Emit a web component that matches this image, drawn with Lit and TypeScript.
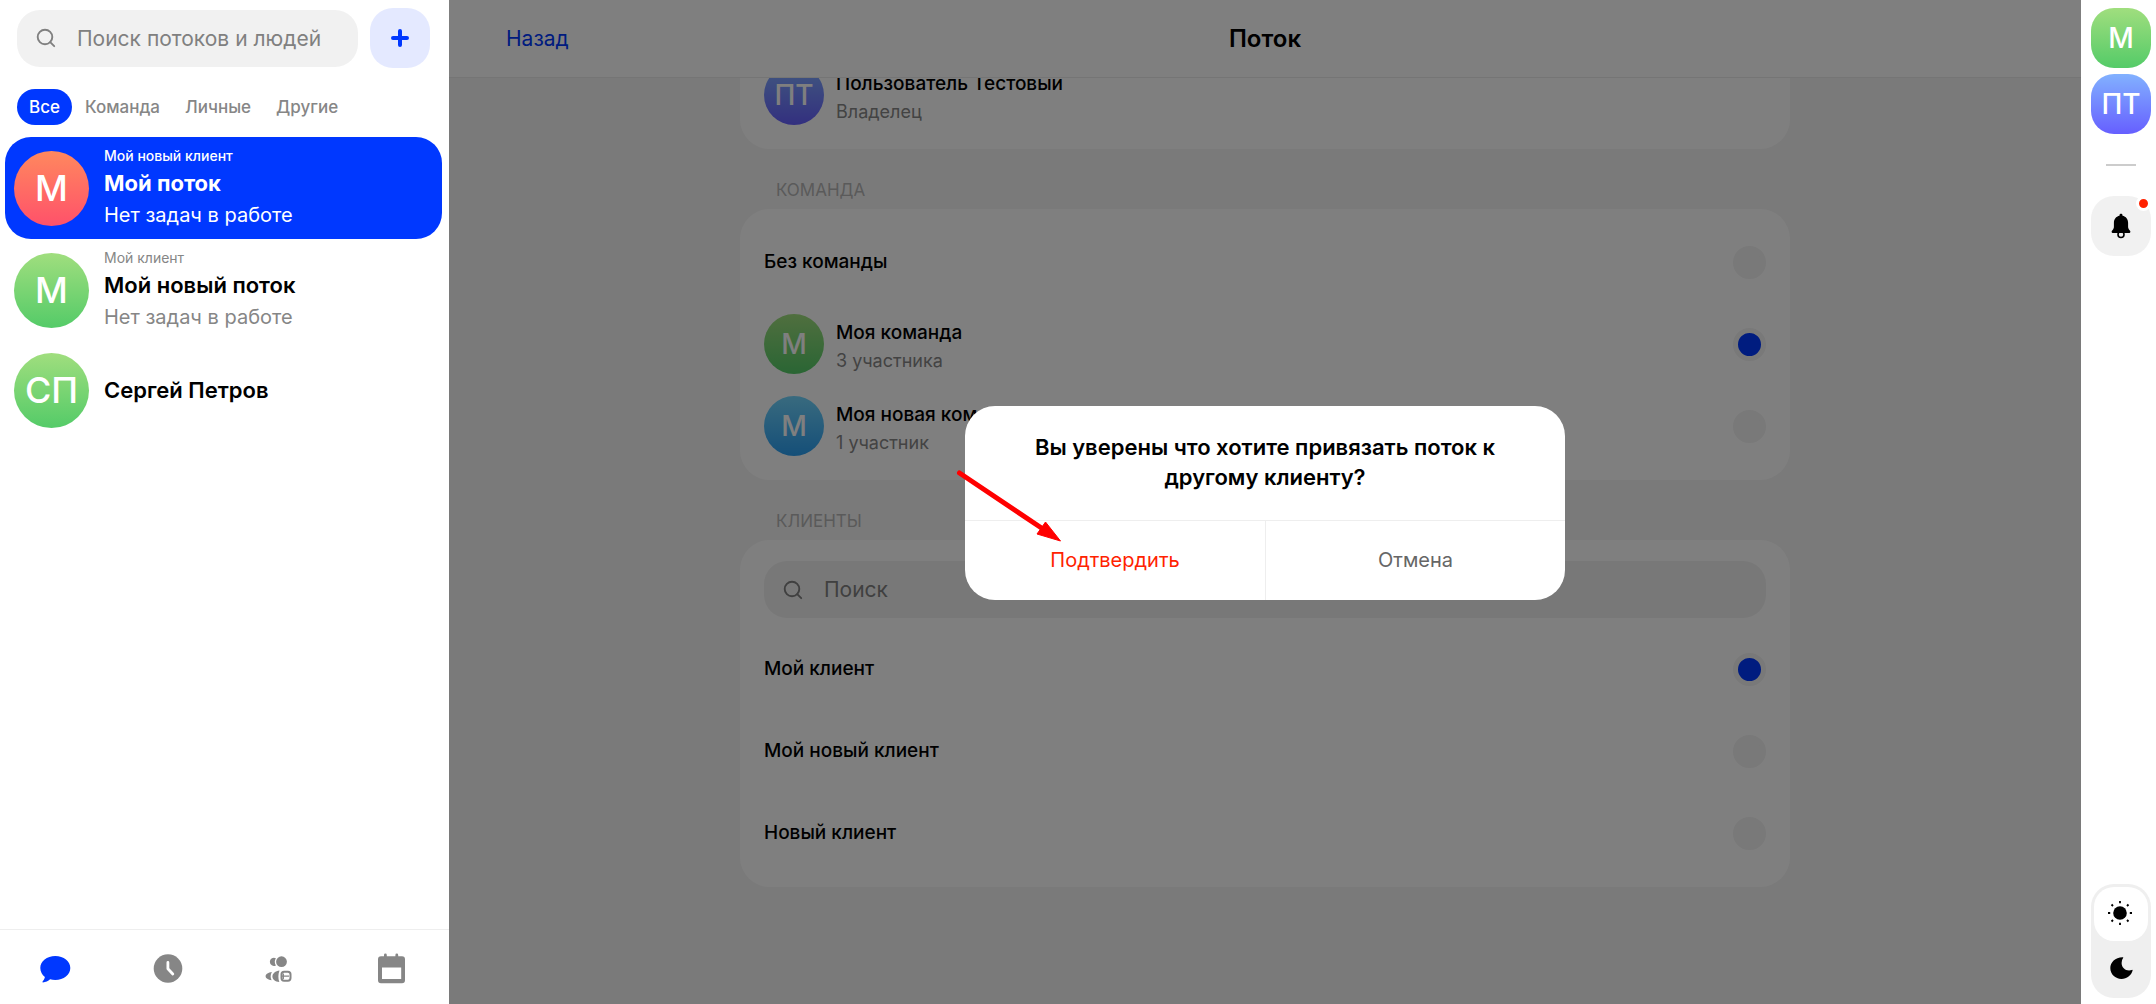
import { LitElement, html, css, svg, nothing } from "lit";
import { customElement, property, state } from "lit/decorators.js";
import { classMap } from "lit/directives/class-map.js";

type Tone = "green" | "coral" | "violet" | "azure";

interface Flow {
  initials: string;
  tone: Tone;
  client?: string;
  title: string;
  note?: string;
}

interface Choice {
  title: string;
  initials?: string;
  tone?: Tone;
  note?: string;
}

const FLOWS: Flow[] = [
  { initials: "М", tone: "coral", client: "Мой новый клиент", title: "Мой поток", note: "Нет задач в работе" },
  { initials: "М", tone: "green", client: "Мой клиент", title: "Мой новый поток", note: "Нет задач в работе" },
  { initials: "СП", tone: "green", title: "Сергей Петров" },
];

const TEAMS: Choice[] = [
  { title: "Без команды" },
  { title: "Моя команда", initials: "М", tone: "green", note: "3 участника" },
  { title: "Моя новая команда", initials: "М", tone: "azure", note: "1 участник" },
];

const CLIENTS: Choice[] = [
  { title: "Мой клиент" },
  { title: "Мой новый клиент" },
  { title: "Новый клиент" },
];

const FILTERS = ["Все", "Команда", "Личные", "Другие"];

const searchIcon = html`<svg class="glass" viewBox="0 0 20 20" width="20" height="20" aria-hidden="true">
  <circle cx="9" cy="9" r="7.300" fill="none" stroke="currentColor" stroke-width="1.900" />
  <path d="M14.200 14.200l4 4" fill="none" stroke="currentColor" stroke-width="1.900" stroke-linecap="round" />
</svg>`;

const navIcons = [
  {
    name: "chats",
    icon: svg`<path transform="translate(-.7 0)" d="M16 4c8.400 0 15 5.200 15 12s-6.600 12-15 12c-1.900 0-3.600-.3-5.200-.7C8.900 29 6.300 30.300 3.600 30.400c-.5 0-.6-.5-.3-.9 1-1.200 2-2.600 2.300-4.500C2.800 22.800 1 19.600 1 16 1 9.200 7.600 4 16 4z" fill="currentColor"/>`,
  },
  {
    name: "time",
    icon: svg`<circle cx="16" cy="16.500" r="14.300" fill="currentColor"/><path d="M15.900 10.500v6.300l4.900 5.200" fill="none" stroke="#fff" stroke-width="2.800" stroke-linecap="round" stroke-linejoin="round"/>`,
  },
  {
    name: "people",
    icon: svg`<g fill="currentColor"><circle cx="18.500" cy="9.700" r="5.400"/><path d="M12.900 6.200a4.100 4.100 0 1 0 0 7.200 6.800 6.800 0 0 1 0-7.200z"/><path d="M8.900 20c-3.500.5-6.300 2.100-6.300 4.200 0 2 2.600 3.600 6 4.100-1.300-2.500-1.300-5.500.3-8.300z"/><path d="M16.500 18.500c-4 .5-7.100 3-7.100 6 0 3 2.900 5.200 6.900 5.600-1.300-3.400-1.200-8.200.2-11.600z"/></g><rect x="18.500" y="19.700" width="9" height="9" rx="2.600" fill="none" stroke="currentColor" stroke-width="2"/><path d="M18.500 24.100h7.500M20.300 21.500v5.500" stroke="currentColor" stroke-width="1.300"/>`,
  },
  {
    name: "calendar",
    icon: svg`<path transform="translate(1 0)" d="M5 4.200h3V2.900a1.400 1.400 0 0 1 2.800 0v1.300h8.600V2.900a1.400 1.400 0 0 1 2.800 0v1.300H26A3 3 0 0 1 29 7.200v21A3 3 0 0 1 26 31.200H5a3 3 0 0 1-3-3v-21a3 3 0 0 1 3-3zM6 15.500v11.600h19.200V15.500z" fill="currentColor" fill-rule="evenodd"/>`,
  },
];

@customElement("user-avatar")
export class UserAvatar extends LitElement {
  @property() tone: Tone = "green";
  @property() size: "m" | "l" = "m";
  @property() shape: "round" | "tile" = "round";

  static styles = css`
    :host { display: block; flex: none; }
    .face {
      display: flex; align-items: center; justify-content: center;
      width: 60px; height: 60px; border-radius: 50%;
      color: #fff; font-size: 28px; line-height: 1; font-weight: 500;
    }
    .l { width: 75px; height: 75px; font-size: 36px; }
    .tile { border-radius: 23px; }
    .green { background: linear-gradient(#a0de7e, #54cb68); }
    .coral { background: linear-gradient(#ff885e, #ff516a); }
    .violet { background: linear-gradient(#82b1ff, #665fff); }
    .azure { background: linear-gradient(#72d5fd, #2a9ef1); }
  `;

  render() {
    return html`<div class="face ${this.tone} ${this.size} ${this.shape}"><slot></slot></div>`;
  }
}

@customElement("flow-sidebar")
export class FlowSidebar extends LitElement {
  @state() private filter = 0;
  @state() private current = 0;

  static styles = css`
    :host { display: flex; flex-direction: column; background: #fff; }
    button, input { font: inherit; border: 0; margin: 0; }
    button { cursor: pointer; }
    .top { display: flex; align-items: center; gap: 12px; padding: 8px 19px 0 17px; }
    .search {
      flex: 1; min-width: 0; height: 57px; box-sizing: border-box;
      display: flex; align-items: center; gap: 21px; padding: 0 19px;
      background: #f1f1f1; border-radius: 23px; color: #808080;
    }
    .glass { flex: none; }
    .field { flex: 1; min-width: 0; padding: 0; background: none; outline: 0; font-size: 21px; color: #000; }
    .field::placeholder { color: #808080; opacity: 1; }
    .add {
      width: 60px; height: 60px; border-radius: 23px; padding: 0;
      display: grid; place-items: center; background: #e4e9ff; color: #0038ff;
    }
    .filters { display: flex; gap: 1px; padding: 21px 17px 12px; }
    .filter {
      height: 36px; padding: 0 12px; border-radius: 18px; background: none;
      color: #868686; font-size: 17px; font-weight: 500;
    }
    .filter.on { background: #0038ff; color: #fff; }
    .list { flex: 1; min-height: 0; display: flex; flex-direction: column; padding: 0 7px 0 5px; overflow: hidden; }
    .flow {
      display: flex; align-items: center; gap: 15px; min-height: 98px; padding: 0 9px;
      border-radius: 26px; background: none; text-align: left; color: #868686;
    }
    .lines { display: flex; flex-direction: column; }
    .client { font-size: 14px; line-height: 24px; padding-top: 7px; }
    .title { font-size: 22px; line-height: 31px; font-weight: 600; color: #000; }
    .note { font-size: 20px; line-height: 33px; padding-bottom: 7px; }
    .flow.on { background: #0038ff; color: #fff; }
    .flow.on .client { font-weight: 500; }
    .flow.on .title { color: #fff; font-weight: 700; }
    .tabs {
      display: grid; grid-template-columns: repeat(4, 1fr); flex: none; height: 75px; box-sizing: border-box;
      padding: 2px 2px 0 0; border-top: 1px solid #eee;
    }
    .tab { display: grid; place-items: center; padding: 0; background: none; color: #868686; }
    .tab.on { color: #0038ff; }
  `;

  render() {
    return html`
      <div class="top">
        <label class="search">
          ${searchIcon}
          <input class="field" type="text" placeholder="Поиск потоков и людей" />
        </label>
        <button class="add">
          <svg viewBox="0 0 18 18" width="18" height="18" aria-hidden="true">
            <path d="M9 2v14M2 9h14" stroke="currentColor" stroke-width="4" stroke-linecap="round" />
          </svg>
        </button>
      </div>
      <div class="filters">
        ${FILTERS.map(
          (name, i) => html`<button class=${classMap({ filter: true, on: i === this.filter })}
            @click=${() => (this.filter = i)}>${name}</button>`,
        )}
      </div>
      <div class="list">
        ${FLOWS.map(
          (flow, i) => html`<button class=${classMap({ flow: true, on: i === this.current })}
            @click=${() => (this.current = i)}>
            <user-avatar tone=${flow.tone} size="l">${flow.initials}</user-avatar>
            <span class="lines">
              ${flow.client ? html`<span class="client">${flow.client}</span>` : nothing}
              <span class="title">${flow.title}</span>
              ${flow.note ? html`<span class="note">${flow.note}</span>` : nothing}
            </span>
          </button>`,
        )}
      </div>
      <nav class="tabs">
        ${navIcons.map(
          (item, i) => html`<button class=${classMap({ tab: true, on: i === 0 })}>
            <svg viewBox="0 0 32 32" width="32" height="32" aria-hidden="true">${item.icon}</svg>
          </button>`,
        )}
      </nav>
    `;
  }
}

@customElement("flow-settings")
export class FlowSettings extends LitElement {
  @state() private team = 1;
  @state() private client = 0;

  static styles = css`
    :host { display: flex; flex-direction: column; min-height: 0; background: #f5f5f5; }
    .head {
      display: grid; grid-template-columns: 1fr auto 1fr; align-items: center;
      height: 77px; padding: 0 57px; background: #fff; border-bottom: 1px solid #ebebeb;
    }
    .back { color: #0038ff; font-size: 21px; text-decoration: none; }
    .name { margin: 0; font-size: 24px; line-height: 32px; font-weight: 600; color: #000; }
    .scroll {
      flex: 1; min-height: 0; overflow-y: auto; scrollbar-width: none;
      display: flex; flex-direction: column; align-items: center; padding: 60px 24px 117px;
    }
    .card {
      width: 100%; max-width: 1050px; box-sizing: border-box; flex: none;
      padding: 12px 24px 13px; border: 0; margin: 0; background: #fff; border-radius: 30px;
    }
    .caption {
      width: 100%; max-width: 1050px; box-sizing: border-box; flex: none;
      margin: 0; padding: 22px 36px 0; height: 60px;
      font-size: 17px; line-height: 38px; font-weight: 400; color: #b4b4b4;
    }
    .row { display: flex; align-items: center; gap: 12px; height: 82px; cursor: pointer; }
    .text { flex: 1; display: flex; flex-direction: column; }
    .title { font-size: 19px; line-height: 32px; font-weight: 500; color: #000; }
    .note { font-size: 18px; line-height: 23px; color: #868686; }
    .radio {
      appearance: none; flex: none; width: 33px; height: 33px; margin: 0;
      border: 5px solid #f2f2f2; border-radius: 50%; background: #f2f2f2;
    }
    .radio:checked { background: #0038ff; }
    .search {
      display: flex; align-items: center; gap: 21px; height: 57px; box-sizing: border-box;
      margin: 9px 0 10px; padding: 0 19px; border-radius: 23px; background: #f1f1f1; color: #808080;
    }
    .glass { flex: none; }
    .field { flex: 1; min-width: 0; padding: 0; border: 0; outline: 0; background: none; font: inherit; font-size: 21px; }
    .field::placeholder { color: #808080; opacity: 1; }
  `;

  firstUpdated() {
    const box = this.renderRoot.querySelector(".scroll");
    if (box) box.scrollTop = box.scrollHeight;
  }

  private rows(group: string, items: Choice[], chosen: number, pick: (i: number) => void) {
    return items.map(
      (item, i) => html`<label class="row">
        ${item.initials ? html`<user-avatar tone=${item.tone!}>${item.initials}</user-avatar>` : nothing}
        <span class="text">
          <span class="title">${item.title}</span>
          ${item.note ? html`<span class="note">${item.note}</span>` : nothing}
        </span>
        <input class="radio" type="radio" name=${group} .checked=${i === chosen} @change=${() => pick(i)} />
      </label>`,
    );
  }

  render() {
    return html`
      <header class="head">
        <a class="back" href="#">Назад</a>
        <h1 class="name">Поток</h1>
      </header>
      <div class="scroll">
        <section class="card">
          <div class="row">
            <user-avatar tone="violet">ПТ</user-avatar>
            <span class="text">
              <span class="title">Пользователь Тестовый</span>
              <span class="note">Владелец</span>
            </span>
          </div>
        </section>
        <h2 class="caption">КОМАНДА</h2>
        <section class="card">${this.rows("team", TEAMS, this.team, (i) => (this.team = i))}</section>
        <h2 class="caption">КЛИЕНТЫ</h2>
        <section class="card">
          <label class="search">
            ${searchIcon}
            <input class="field" type="text" placeholder="Поиск" />
          </label>
          ${this.rows("client", CLIENTS, this.client, (i) => (this.client = i))}
        </section>
      </div>
    `;
  }
}

@customElement("confirm-dialog")
export class ConfirmDialog extends LitElement {
  static styles = css`
    :host {
      display: flex; align-items: center; justify-content: center;
      padding: 26px 24px 24px; box-sizing: border-box; background: rgba(0, 0, 0, 0.5);
    }
    .box {
      position: relative; width: 100%; max-width: 600px; padding: 0; margin: 0; border: 0;
      border-radius: 30px; background: #fff; color: #000;
    }
    .question {
      margin: 0; padding: 26px 60px 28px; text-align: center;
      font-size: 22px; line-height: 30px; font-weight: 600;
    }
    .actions { display: grid; grid-template-columns: 1fr 1fr; border-top: 1px solid #eee; }
    .action {
      height: 79px; padding: 0 0 2px; border: 0; background: none; cursor: pointer;
      font: inherit; font-size: 20px; color: #666;
    }
    .action.danger { color: #ff2200; }
    .action + .action { border-left: 1px solid #eee; }
    .arrow { position: absolute; left: -10px; top: 62px; pointer-events: none; }
  `;

  render() {
    return html`
      <dialog class="box" open>
        <h2 class="question">Вы уверены что хотите привязать поток к другому клиенту?</h2>
        <div class="actions">
          <button class="action danger">Подтвердить</button>
          <button class="action">Отмена</button>
        </div>
        <svg class="arrow" viewBox="0 0 108 76" width="108" height="76" aria-hidden="true">
          <path d="M4.500 5L88 61" stroke="#f00" stroke-width="5" stroke-linecap="round" />
          <path d="M105.500 73L90.500 54l-8.500 12z" fill="#f00" stroke="#f00" stroke-linejoin="round" />
        </svg>
      </dialog>
    `;
  }
}

@customElement("account-rail")
export class AccountRail extends LitElement {
  static styles = css`
    :host {
      display: flex; flex-direction: column; align-items: center; gap: 6px;
      box-sizing: border-box; padding: 8px 5px 6px 10px; background: #fff;
    }
    button { border: 0; padding: 0; margin: 0; cursor: pointer; font: inherit; }
    .account { background: none; }
    .rule { width: 30px; height: 2px; margin: 24px 0; background: #ccc; }
    .bell {
      position: relative; width: 60px; height: 60px; border-radius: 23px; background: #f1f1f1;
      display: grid; place-items: center; color: #000;
    }
    .dot {
      position: absolute; top: 0; right: 0; width: 9px; height: 9px;
      border: 3px solid #fff; border-radius: 50%; background: #ff2200;
    }
    .theme {
      margin-top: auto; padding: 3px; border-radius: 23px; background: #efefef;
      display: flex; flex-direction: column;
    }
    .mode { width: 54px; height: 54px; border-radius: 20px; background: none; display: grid; place-items: center; color: #000; }
    .mode.on { background: #fff; }
  `;

  render() {
    return html`
      <button class="account"><user-avatar tone="green" shape="tile">М</user-avatar></button>
      <button class="account"><user-avatar tone="violet" shape="tile">ПТ</user-avatar></button>
      <div class="rule"></div>
      <button class="bell">
        <svg viewBox="0 0 20 26" width="20" height="26" aria-hidden="true">
          <path d="M10 .8c.9 0 1.500.6 1.500 1.400v.5c3.500.7 5.600 3.400 5.600 7v3.800c0 1.700.5 2.700 1.500 3.800.5.600.8 1 .8 1.500 0 .8-.6 1.300-1.600 1.300H2.200c-1 0-1.600-.5-1.600-1.300 0-.5.300-.9.800-1.500 1-1.100 1.500-2.100 1.500-3.800V9.700c0-3.600 2.100-6.300 5.600-7v-.5C8.500 1.400 9.100.8 10 .8z" fill="currentColor" />
          <circle cx="10" cy="21.500" r="3" fill="none" stroke="currentColor" stroke-width="1.600" />
        </svg>
        <span class="dot"></span>
      </button>
      <div class="theme">
        <button class="mode on">
          <svg viewBox="1 1 26 26" width="26" height="26" aria-hidden="true">
            <circle cx="13" cy="13" r="6.800" fill="currentColor" />
            <path d="M13 1v2.200M13 22.800V25M1 13h2.200M22.800 13H25M4.500 4.500L6 6M20 20l1.500 1.500M21.500 4.500L20 6M6 20l-1.500 1.500" stroke="currentColor" stroke-width="1.800" />
          </svg>
        </button>
        <button class="mode">
          <svg viewBox="0 0 24 24" width="24" height="24" aria-hidden="true">
            <path d="M13.500 1.200c.7-.1 1 .3.6.9a7.800 7.800 0 0 0-1.500 4.800c0 4.300 3.300 7.500 7.500 7.500 1 0 1.900-.2 2.700-.5.600-.2 1 .1.800.700C22.300 19.500 17.900 23 12.500 23 6.300 23 1.300 18.200 1.300 12.100c0-5.700 4.900-10.800 12.200-10.900z" fill="currentColor" />
          </svg>
        </button>
      </div>
    `;
  }
}

@customElement("app-root")
export class AppRoot extends LitElement {
  static styles = css`
    :host {
      display: grid; grid-template-columns: 449px 1fr 75px; grid-template-rows: 100vh;
      font-family: Inter, "Liberation Sans", sans-serif; overflow: hidden;
    }
    .work { display: grid; min-width: 0; min-height: 0; }
    .screen, .veil { grid-area: 1 / 1; min-height: 0; }
    .veil { z-index: 1; }
  `;

  render() {
    return html`
      <flow-sidebar></flow-sidebar>
      <main class="work">
        <flow-settings class="screen"></flow-settings>
        <confirm-dialog class="veil"></confirm-dialog>
      </main>
      <account-rail></account-rail>
    `;
  }
}
